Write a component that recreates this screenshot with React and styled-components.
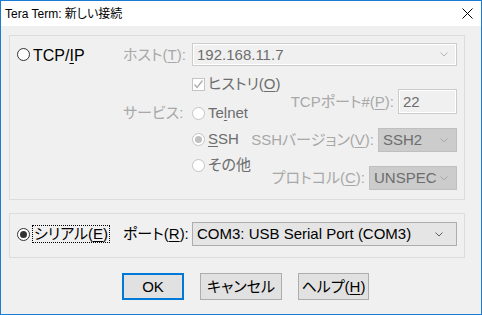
import React from "react";
import styled, { createGlobalStyle } from "styled-components";

const FONT = `"Liberation Sans", "Noto Sans CJK JP", sans-serif`;

export default function App() {
  return (
    <>
      <GlobalStyle />
      <Window>
        <TitleBar>
          <Title>Tera Term: 新しい接続</Title>
          <CloseButton>
            <svg width="11" height="11" viewBox="0 0 11 11">
              <path d="M0.5 0.5 L10.5 10.5 M10.5 0.5 L0.5 10.5" stroke="#000" strokeWidth="1" />
            </svg>
          </CloseButton>
        </TitleBar>

        <Body>
          <GroupBox $height={165} $padTop={7}>
            <FieldGrid>
              <RadioItem>
                <Radio />
                <BigText>
                  TCP/<Key>I</Key>P
                </BigText>
              </RadioItem>
              <Label>
                ホスト(<Key>T</Key>):
              </Label>
              <Select $tone="edit" $width={265} $height={23} $arrowPad={8}>
                <SelectText>192.168.11.7</SelectText>
                <Chevron color="#b4b4b4" />
              </Select>

              <ServiceLabel>サービス:</ServiceLabel>
              <ServiceArea>
                <OptionColumn>
                  <OptionRow>
                    <CheckBox>
                      <svg width="11" height="11" viewBox="0 0 11 11">
                        <path d="M1.5 5.5 L4 8.5 L9.5 1.5" fill="none" stroke="#b0b0b0" strokeWidth="1.4" />
                      </svg>
                    </CheckBox>
                    <OptionText>
                      ヒストリ(<Key>O</Key>)
                    </OptionText>
                  </OptionRow>
                  <OptionRow $gapTop={3}>
                    <Radio $disabled />
                    <OptionText>
                      Te<Key>l</Key>net
                    </OptionText>
                  </OptionRow>
                  <OptionRow>
                    <Radio $disabled $checked />
                    <OptionText>
                      <Key>S</Key>SH
                    </OptionText>
                  </OptionRow>
                  <OptionRow>
                    <Radio $disabled />
                    <OptionText>その他</OptionText>
                  </OptionRow>
                </OptionColumn>

                <SettingColumn>
                  <SettingRow>
                    <Label>
                      TCPポート#(<Key>P</Key>):
                    </Label>
                    <Select $tone="edit" $width={59} $height={25}>
                      <SelectText>22</SelectText>
                    </Select>
                  </SettingRow>
                  <SettingRow>
                    <Label>
                      SSHバージョン(<Key>V</Key>):
                    </Label>
                    <Select $tone="off" $width={79} $height={24} $arrowPad={8}>
                      <SelectText>SSH2</SelectText>
                      <Chevron color="#a8a8a8" />
                    </Select>
                  </SettingRow>
                  <SettingRow>
                    <Label>
                      プロトコル(<Key>C</Key>):
                    </Label>
                    <Select $tone="off" $width={88} $height={24} $arrowPad={8}>
                      <SelectText>UNSPEC</SelectText>
                      <Chevron color="#a8a8a8" />
                    </Select>
                  </SettingRow>
                </SettingColumn>
              </ServiceArea>
            </FieldGrid>
          </GroupBox>

          <GroupBox $height={45} $padTop={8} $gapTop={13}>
            <FieldGrid>
              <RadioItem>
                <Radio $checked />
                <FocusText>
                  シリアル(<Key>E</Key>)
                </FocusText>
              </RadioItem>
              <Label $active>
                ポート(<Key>R</Key>):
              </Label>
              <Select $tone="normal" $width={265} $height={24} $arrowPad={13}>
                <SelectText $active>COM3: USB Serial Port (COM3)</SelectText>
                <Chevron color="#606060" />
              </Select>
            </FieldGrid>
          </GroupBox>

          <ButtonRow>
            <Button $width={62} $default>
              OK
            </Button>
            <Button $width={82}>キャンセル</Button>
            <Button $width={71}>
              ヘルプ(<Key>H</Key>)
            </Button>
          </ButtonRow>
        </Body>
      </Window>
    </>
  );
}

function Chevron({ color }) {
  return (
    <svg width="8" height="5" viewBox="0 0 8 5">
      <polyline points="0.5,0.5 4,4 7.5,0.5" fill="none" stroke={color} strokeWidth="1" />
    </svg>
  );
}

const GlobalStyle = createGlobalStyle`
  html, body {
    margin: 0;
    padding: 0;
    background: #ffffff;
  }
  body {
    font-family: ${FONT};
    font-size: 15px;
    font-feature-settings: "palt";
    color: #000000;
  }
  * {
    box-sizing: border-box;
  }
`;

const Window = styled.div`
  width: 482px;
  height: 315px;
  border: 1px solid #1b7cd5;
  background: #f0f0f0;
  display: flex;
  flex-direction: column;
`;

const TitleBar = styled.div`
  height: 25px;
  flex: none;
  background: #ffffff;
  display: flex;
  align-items: center;
  justify-content: space-between;
  padding-left: 4px;
`;

const Title = styled.span`
  font-size: 12px;
  line-height: 16px;
  color: #000;
`;

const CloseButton = styled.div`
  width: 28px;
  height: 25px;
  display: flex;
  align-items: center;
  justify-content: center;
`;

const Body = styled.div`
  flex: 1;
  display: flex;
  flex-direction: column;
  padding: 9px 0 0 8px;
`;

const GroupBox = styled.div`
  width: 456px;
  height: ${(p) => p.$height}px;
  margin-top: ${(p) => p.$gapTop || 0}px;
  border: 1px solid #dcdcdc;
  padding: ${(p) => p.$padTop}px 0 0 7px;
`;

const FieldGrid = styled.div`
  display: grid;
  grid-template-columns: 101px 64px 265px;
  column-gap: 5px;
  align-items: center;
`;

const RadioItem = styled.div`
  display: flex;
  align-items: center;
  gap: 3px;
`;

const Radio = styled.span`
  width: 13px;
  height: 13px;
  flex: none;
  border-radius: 50%;
  border: 1px solid ${(p) => (p.$disabled ? "#c4c4c4" : "#333333")};
  background: #ffffff;
  display: flex;
  align-items: center;
  justify-content: center;

  &::after {
    content: "";
    display: ${(p) => (p.$checked ? "block" : "none")};
    width: 7px;
    height: 7px;
    border-radius: 50%;
    background: ${(p) => (p.$disabled ? "#c0c0c0" : "#333333")};
  }
`;

const CheckBox = styled.span`
  width: 13px;
  height: 13px;
  flex: none;
  border: 1px solid #c4c4c4;
  background: #ffffff;
  display: flex;
  align-items: center;
  justify-content: center;
`;

const Key = styled.span`
  text-decoration: underline;
  text-underline-offset: 2px;
`;

const BigText = styled.span`
  font-size: 16px;
  line-height: 20px;
  color: #000;
  margin-top: 3px;
`;

const FocusText = styled.span`
  line-height: 16px;
  color: #000;
  outline: 1px dotted #000;
  outline-offset: 0;
  padding: 0 1px;
  white-space: nowrap;
`;

const Label = styled.span`
  line-height: 20px;
  white-space: nowrap;
  color: ${(p) => (p.$active ? "#000000" : "#a8a8a8")};
`;

const ServiceLabel = styled(Label)`
  grid-column: 2;
  align-self: start;
  margin-top: 37px;
`;

const ServiceArea = styled.div`
  grid-column: 3;
  align-self: start;
  display: flex;
  justify-content: space-between;
`;

const OptionColumn = styled.div`
  flex: 1;
  min-width: 0;
  display: flex;
  flex-direction: column;
  padding-top: 5px;
`;

const OptionRow = styled.div`
  height: 26px;
  margin-top: ${(p) => p.$gapTop || 0}px;
  display: flex;
  align-items: center;
  gap: 3px;
  white-space: nowrap;
`;

const OptionText = styled.span`
  line-height: 20px;
  color: #6d6d6d;
`;

const SettingColumn = styled.div`
  flex: none;
  display: flex;
  flex-direction: column;
  align-items: flex-end;
  gap: 14px;
  padding-top: 23px;
`;

const SettingRow = styled.div`
  display: flex;
  align-items: center;
  gap: 4px;
`;

const TONES = {
  edit: { bg: "#f0f0f0", border: "#cccccc", inner: "#ffffff" },
  off: { bg: "#cccccc", border: "#bfbfbf", inner: "#cccccc" },
  normal: { bg: "#e5e5e5", border: "#adadad", inner: "#e5e5e5" },
};

const Select = styled.div`
  width: ${(p) => p.$width}px;
  height: ${(p) => p.$height}px;
  flex: none;
  display: flex;
  align-items: center;
  justify-content: space-between;
  padding: 0 ${(p) => p.$arrowPad || 0}px 0 4px;
  border: 1px solid ${(p) => TONES[p.$tone].border};
  background: ${(p) => TONES[p.$tone].bg};
  box-shadow: inset 0 0 0 1px ${(p) => TONES[p.$tone].inner};
`;

const SelectText = styled.span`
  line-height: 18px;
  white-space: nowrap;
  color: ${(p) => (p.$active ? "#000000" : "#6d6d6d")};
`;

const ButtonRow = styled.div`
  display: flex;
  gap: 16px;
  margin-top: 15px;
  padding-left: 113px;
`;

const Button = styled.div`
  width: ${(p) => p.$width}px;
  height: 27px;
  display: flex;
  align-items: center;
  justify-content: center;
  background: #e1e1e1;
  border: ${(p) => (p.$default ? "2px solid #0078d7" : "1px solid #adadad")};
  color: #000;
  line-height: 18px;
`;
